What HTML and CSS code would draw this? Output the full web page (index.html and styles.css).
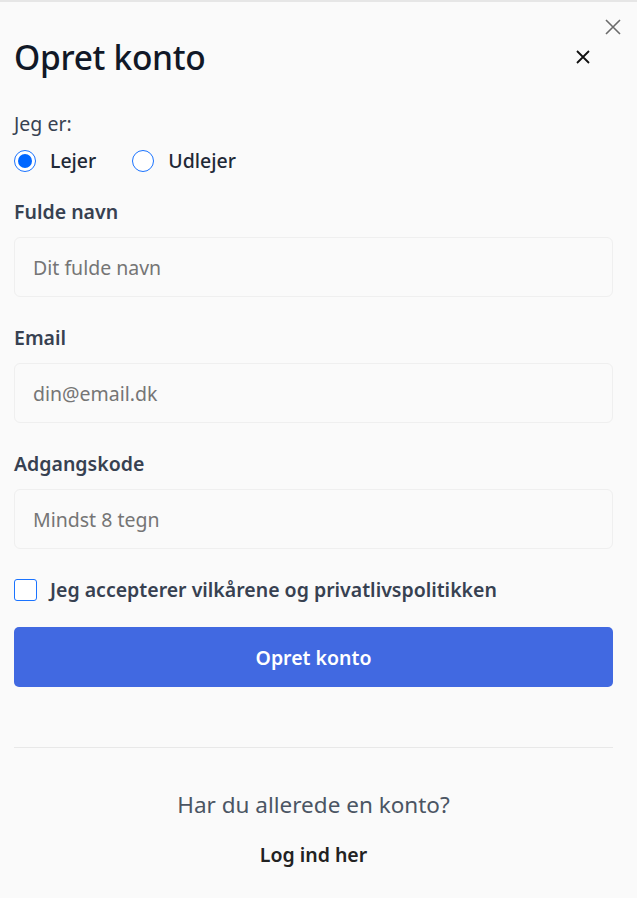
FILE: index.html
```html
<!DOCTYPE html>
<html lang="da">
<head>
<meta charset="utf-8">
<title>Opret konto</title>
<link rel="stylesheet" href="styles.css">
</head>
<body>
<div class="topline"></div>
<button class="dismiss" aria-label="Luk">
  <svg width="16" height="16" viewBox="0 0 16 16"><path d="M1 1L15 15M15 1L1 15" stroke="#6b6b6b" stroke-width="1.6" fill="none"/></svg>
</button>
<main class="modal">
  <div class="head">
    <h1 class="title">Opret konto</h1>
    <button class="close" aria-label="Luk">
      <svg width="14" height="14" viewBox="0 0 14 14"><path d="M1 1L13 13M13 1L1 13" stroke="#111" stroke-width="1.8" fill="none"/></svg>
    </button>
  </div>
  <div class="label role-label">Jeg er:</div>
  <div class="roles">
    <label class="role"><span class="radio checked"></span><span>Lejer</span></label>
    <label class="role"><span class="radio"></span><span>Udlejer</span></label>
  </div>
  <div class="label">Fulde navn</div>
  <div class="input">Dit fulde navn</div>
  <div class="label">Email</div>
  <div class="input">din@email.dk</div>
  <div class="label">Adgangskode</div>
  <div class="input">Mindst 8 tegn</div>
  <label class="terms"><span class="check"></span><span>Jeg accepterer vilkårene og privatlivspolitikken</span></label>
  <button class="submit">Opret konto</button>
  <hr class="divider">
  <p class="have">Har du allerede en konto?</p>
  <p class="login">Log ind her</p>
</main>
</body>
</html>
```
FILE: styles.css
```css
* { box-sizing: border-box; }
html, body { margin: 0; padding: 0; }
body {
  background: #fafafa;
  font-family: "Noto Sans", "Open Sans", sans-serif;
  color: #374151;
  width: 637px;
  min-height: 898px;
  position: relative;
}
.topline { height: 2px; background: #e6e6e6; }
.dismiss {
  position: absolute; top: 19px; right: 16px;
  width: 16px; height: 16px; padding: 0; border: 0; background: none;
  display: flex;
}
.modal { padding: 0 24px 0 14px; }
.head {
  display: flex; align-items: center; justify-content: space-between;
  margin-top: 36px; height: 38px;
}
.title {
  margin: 0; font-size: 33.5px; font-weight: 500; line-height: 38px;
  color: #111827; letter-spacing: -0.3px;
}
.close {
  width: 60px; height: 38px; border: 0; background: none; padding: 0;
  display: flex; align-items: center; justify-content: center;
}
.label {
  font-size: 19.5px; line-height: 27px; font-weight: 600; color: #374151;
  margin-bottom: 12px;
}
.role-label { font-weight: 400; margin-top: 34px; margin-bottom: 10px; }
.roles { display: flex; gap: 36px; height: 27px; align-items: center; margin-bottom: 24px; }
.role { display: flex; align-items: center; gap: 14px; font-size: 19.5px; font-weight: 500; color: #1f2937; }
.radio {
  width: 22px; height: 22px; border-radius: 50%; border: 1px solid #1a73ff;
  background: #fff; display: flex; align-items: center; justify-content: center;
}
.radio.checked::after {
  content: ""; width: 14px; height: 14px; border-radius: 50%; background: #0066ff;
}
.input {
  height: 60px; border: 1px solid #efefef; border-radius: 6px; background: #fafafa;
  padding: 0 18px; display: flex; align-items: center;
  font-size: 19.5px; color: #757575; margin-bottom: 27px;
}
.terms {
  display: flex; align-items: center; gap: 13px; height: 27px;
  font-size: 19.5px; font-weight: 600; color: #374151; margin-bottom: 24px;
}
.check { width: 23px; height: 22px; border: 1px solid #1a73ff; border-radius: 3px; background: #fff; }
.submit {
  display: block; width: 100%; height: 60px; border: 0; border-radius: 5px;
  background: #4169e1; color: #fff; font-family: inherit;
  font-size: 19.5px; font-weight: 600;
}
.divider { border: 0; border-top: 1px solid #e8e8e8; margin: 60px 0 0; }
.have {
  margin: 42px 0 0; text-align: center; font-size: 22.5px; line-height: 30px; color: #4b5563;
}
.login {
  margin: 21px 0 0; text-align: center; font-size: 19.5px; line-height: 27px;
  font-weight: 600; color: #222;
}
```
